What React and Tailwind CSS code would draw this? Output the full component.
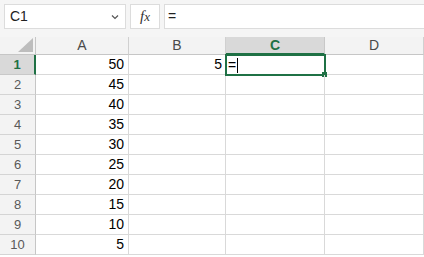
import React from "react";

const values = [50, 45, 40, 35, 30, 25, 20, 15, 10, 5];
const cols = ["A", "B", "C", "D"];

function ColHeader({ label, active }) {
  return (
    <div
      className={
        active
          ? "h-[18px] flex items-center justify-center bg-[#d9d9d9] border-r border-[#c8c8c8] border-b-2 border-b-[#1f7145] text-[14px] font-bold text-[#1f7145]"
          : "h-[18px] flex items-center justify-center bg-[#f3f3f3] border-r border-[#d0d0d0] border-b border-b-[#c6c6c6] text-[14px] text-[#4a4a4a]"
      }
    >
      {label}
    </div>
  );
}

function Row({ n, value }) {
  const first = n === 1;
  return (
    <>
      <div
        className={
          first
            ? "h-[20px] flex items-center justify-center bg-[#d9d9d9] border-r-2 border-r-[#1f7145] border-b border-[#c8c8c8] text-[13px] font-bold text-[#1f7145]"
            : "h-[20px] flex items-center justify-center bg-[#f3f3f3] border-r border-r-[#c6c6c6] border-b border-[#d4d4d4] text-[13px] text-[#595959]"
        }
      >
        {n}
      </div>
      <div className="h-[20px] flex items-center justify-end pr-[4px] border-r border-b border-[#d9d9d9] text-[14px] text-black">
        {value}
      </div>
      <div className="h-[20px] flex items-center justify-end pr-[3px] border-r border-b border-[#d9d9d9] text-[14px] text-black">
        {first ? "5" : ""}
      </div>
      <div className="relative h-[20px] border-r border-b border-[#d9d9d9]">
        {first && (
          <div className="absolute -left-[1px] -top-[1px] w-[101px] h-[22px] border-2 border-[#1f7145] flex items-center pl-[1px] text-[14px] text-black">
            <span>=</span>
            <span className="w-px h-[15px] bg-black ml-[1px]"></span>
            <span className="absolute -right-[3px] -bottom-[3px] w-[5px] h-[5px] bg-[#1f7145]"></span>
          </div>
        )}
      </div>
      <div className="h-[20px] border-r border-b border-[#d9d9d9]"></div>
    </>
  );
}

export default function App() {
  return (
    <div className="w-[424px] h-[257px] overflow-hidden bg-white font-['Liberation_Sans',Arial,sans-serif]">
      {/* formula bar */}
      <div className="h-[37px] bg-[#f5f5f5] flex items-start pt-[4px] pl-[4px] gap-[4px]">
        <div className="w-[122px] h-[25px] bg-white border border-[#dcdcdc] flex items-center justify-between pl-[5px] pr-[6px]">
          <span className="text-[14px] text-[#222]">C1</span>
          <svg width="8" height="6" viewBox="0 0 8 6" fill="none">
            <path d="M1 1.5 L4 4.5 L7 1.5" stroke="#555" strokeWidth="1.2" />
          </svg>
        </div>
        <div className="w-[30px] h-[25px] bg-white border border-[#dcdcdc] flex items-center justify-center">
          <span className="font-['Liberation_Serif',serif] italic text-[15px] text-[#333]">
            f<span className="text-[13px]">x</span>
          </span>
        </div>
        <div className="flex-1 h-[25px] bg-white border border-[#dcdcdc] border-r-0 flex items-center pl-[3px] text-[14px] text-[#222]">
          =
        </div>
      </div>

      {/* grid */}
      <div className="grid grid-cols-[36px_93px_97px_99px_1fr]">
        <div className="relative h-[18px] bg-[#f3f3f3] border-r border-[#c6c6c6] border-b border-b-[#c6c6c6]">
          <svg className="absolute right-[2px] bottom-[2px]" width="15" height="14" viewBox="0 0 15 14">
            <polygon points="15,0 15,14 0,14" fill="#bdbdbd" />
          </svg>
        </div>
        {cols.map((c) => (
          <ColHeader key={c} label={c} active={c === "C"} />
        ))}
        {values.map((v, i) => (
          <Row key={i} n={i + 1} value={v} />
        ))}
      </div>
    </div>
  );
}
